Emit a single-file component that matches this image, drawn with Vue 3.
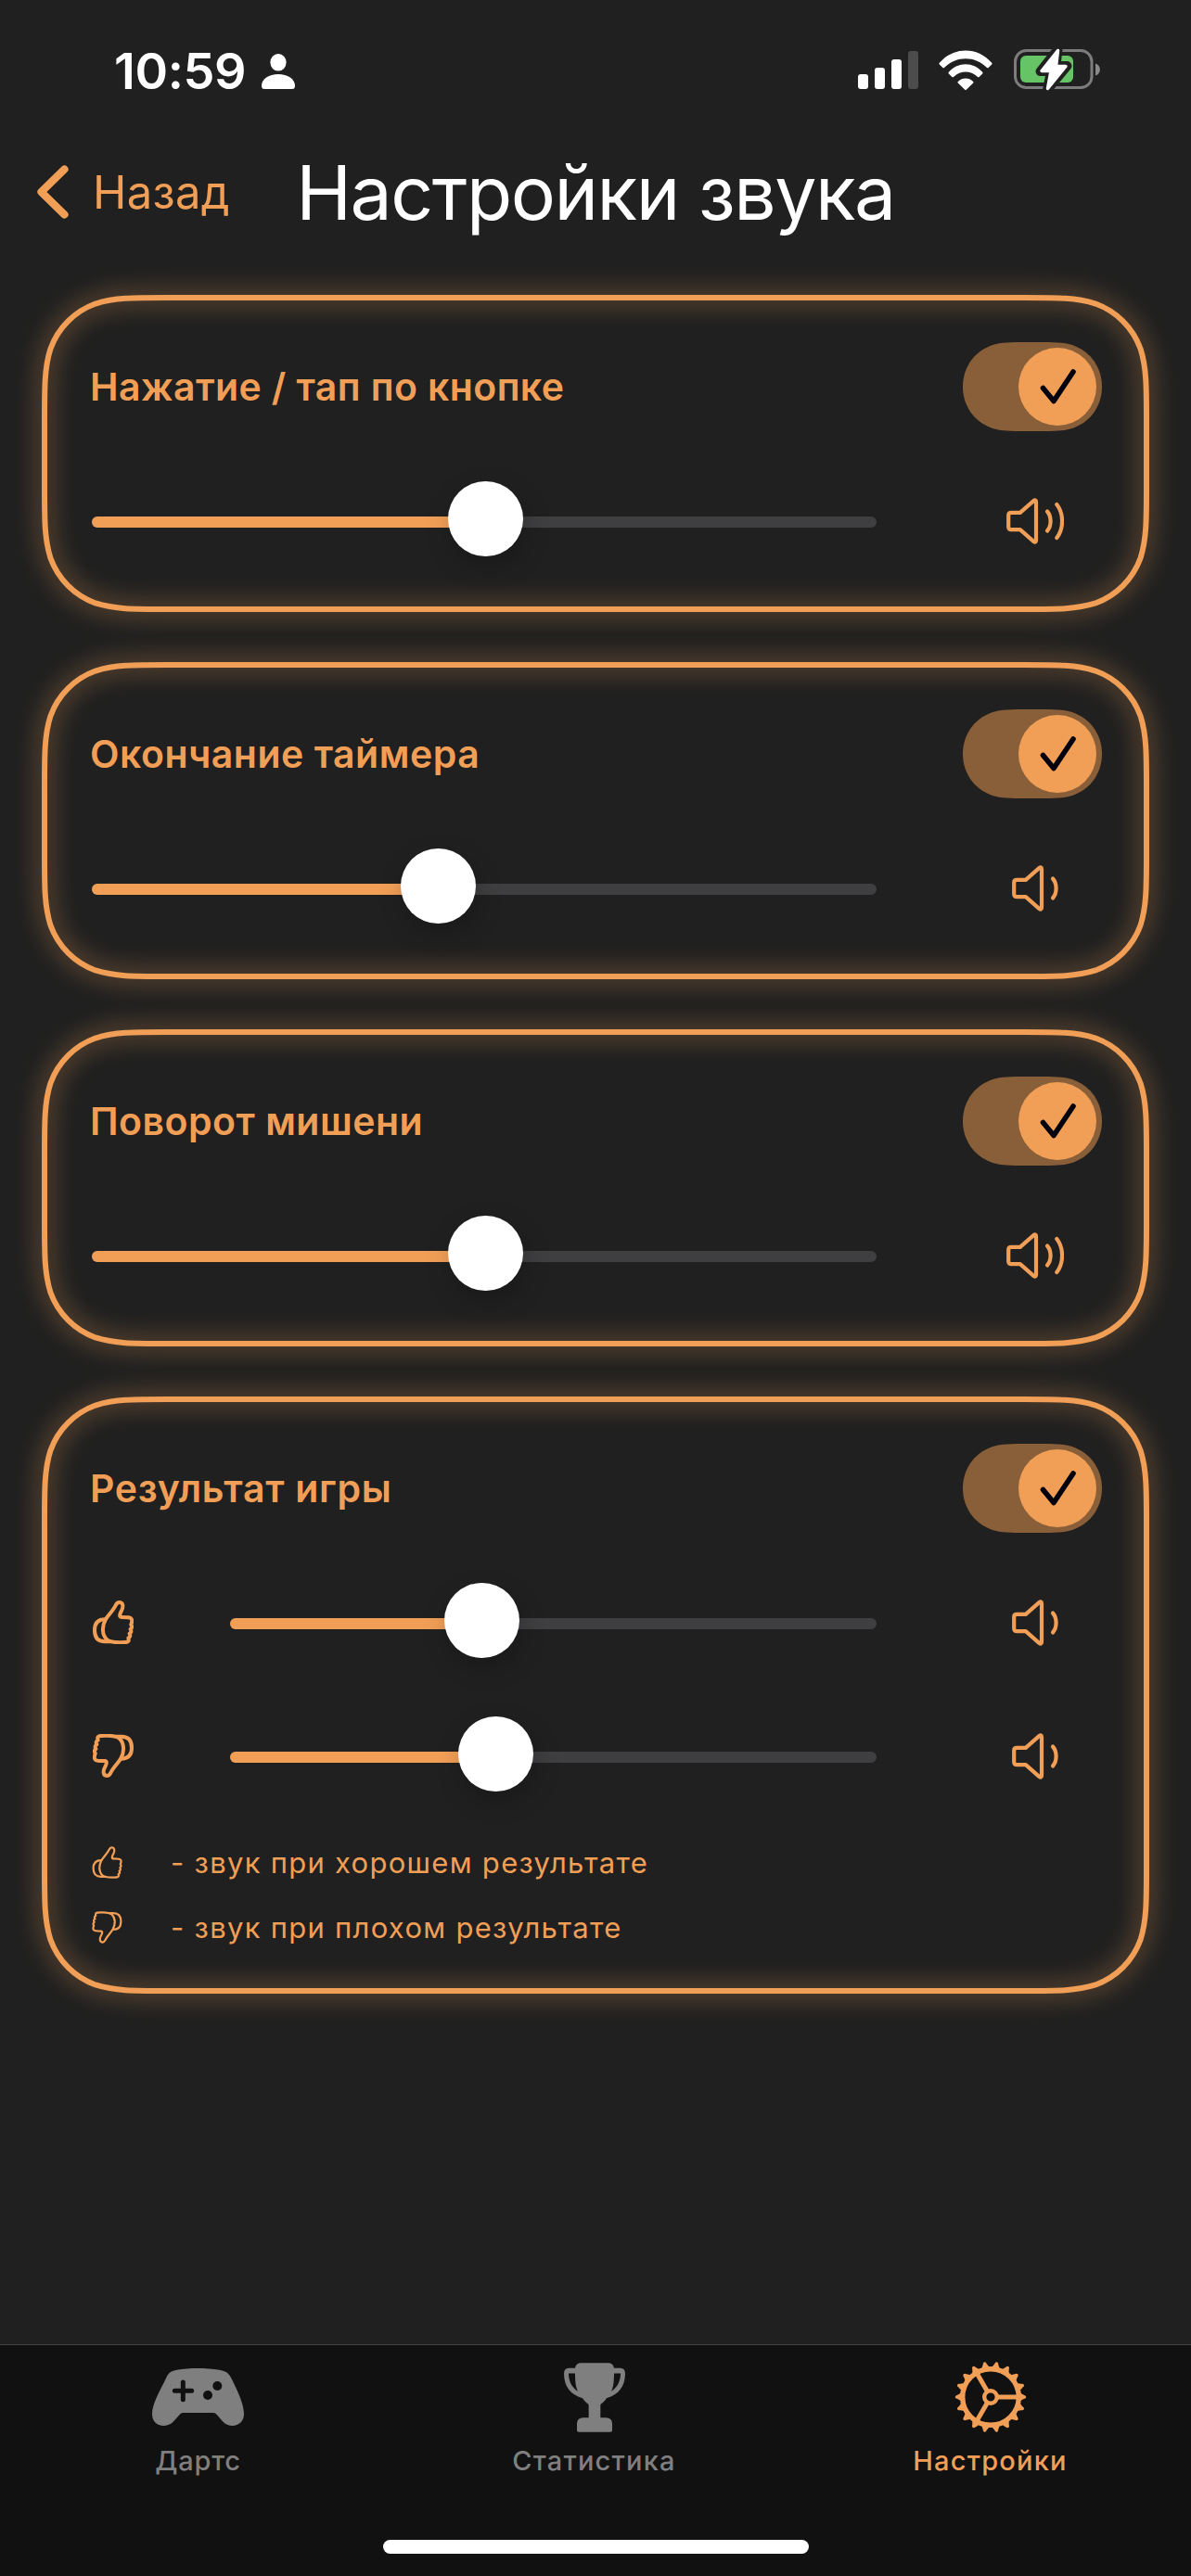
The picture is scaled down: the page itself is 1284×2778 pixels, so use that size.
<script setup>
const R = 90

// Rounded rectangle with continuous-curvature corners
function cardPath(w, h) {
  const i = 3
  const r = R - i
  const x0 = i
  const y0 = i
  const x1 = w - i
  const y1 = h - i
  const a = 1.5287 * r
  const b = 1.0885 * r
  const c = 0.8684 * r
  const d = 0.6315 * r
  const e = 0.0749 * r
  const f = 0.3728 * r
  const g = 0.1691 * r
  return [
    `M${x0 + a} ${y0}H${x1 - a}`,
    `C${x1 - b} ${y0} ${x1 - c} ${y0} ${x1 - d} ${y0 + e}`,
    `C${x1 - f} ${y0 + g} ${x1 - g} ${y0 + f} ${x1 - e} ${y0 + d}`,
    `C${x1} ${y0 + c} ${x1} ${y0 + b} ${x1} ${y0 + a}V${y1 - a}`,
    `C${x1} ${y1 - b} ${x1} ${y1 - c} ${x1 - e} ${y1 - d}`,
    `C${x1 - g} ${y1 - f} ${x1 - f} ${y1 - g} ${x1 - d} ${y1 - e}`,
    `C${x1 - c} ${y1} ${x1 - b} ${y1} ${x1 - a} ${y1}H${x0 + a}`,
    `C${x0 + b} ${y1} ${x0 + c} ${y1} ${x0 + d} ${y1 - e}`,
    `C${x0 + f} ${y1 - g} ${x0 + g} ${y1 - f} ${x0 + e} ${y1 - d}`,
    `C${x0} ${y1 - c} ${x0} ${y1 - b} ${x0} ${y1 - a}V${y0 + a}`,
    `C${x0} ${y0 + b} ${x0} ${y0 + c} ${x0 + e} ${y0 + d}`,
    `C${x0 + g} ${y0 + f} ${x0 + f} ${y0 + g} ${x0 + d} ${y0 + e}`,
    `C${x0 + c} ${y0} ${x0 + b} ${y0} ${x0 + a} ${y0}Z`
  ].join('')
}

const cards = [
  { title: 'Нажатие / тап по кнопке', cls: 't1', height: 342, sliders: [{ value: 50.1, waves: 2 }] },
  { title: 'Окончание таймера', cls: 't2', height: 342, sliders: [{ value: 44.1, waves: 1 }] },
  { title: 'Поворот мишени', cls: 't3', height: 342, sliders: [{ value: 50.1, waves: 2 }] },
  {
    title: 'Результат игры',
    cls: 't4',
    height: 644,
    sliders: [
      { value: 38.9, waves: 1, thumb: 'up' },
      { value: 41.1, waves: 1, thumb: 'down' }
    ],
    legend: [
      { thumb: 'up', text: '- звук при хорошем результате' },
      { thumb: 'down', text: '- звук при плохом результате' }
    ]
  }
]

const thumbHand =
  'M28.5 2C26.5 2 25.5 3.6 24.8 5C22 11 16 16.5 13.8 20.5C9.6 28 10 37 15 42C18 45 24 45.3 30 45.2C36 45.2 38.6 45 38.8 42.5L38.4 40.3Q41.4 38.8 39.6 35.8Q42.6 34 40.6 31Q43.4 29 41.2 26Q43 22 41.6 19.8C40.5 18 38 18 31 18C28.2 18 29 14.5 31 11C33.2 7 33 2 28.5 2Z'
const thumbCuff = 'M13.5 20.3C4 20.3 2 26 2 32C2 40 6 44.2 13 44.2H19'

const teeth = Array.from({ length: 18 }, (_, n) => n * 20)
const spokes = [0, 120, 240]
</script>

<template>
  <div class="screen">
    <header class="status">
      <div class="clock">
        <span class="time">10:59</span>
        <svg class="person" width="36" height="38" viewBox="0 0 36 38">
          <ellipse cx="18" cy="9.3" rx="8.6" ry="9.3" fill="#fff" />
          <path d="M3 38Q0 38 0 34.5C0 27 8 22 18 22S36 27 36 34.5Q36 38 33 38Z" fill="#fff" />
        </svg>
      </div>
      <div class="indicators">
        <svg width="66" height="46" viewBox="0 0 66 46">
          <rect x="0" y="27" width="11" height="16" rx="3" fill="#fff" />
          <rect x="18" y="20" width="11" height="23" rx="3" fill="#fff" />
          <rect x="36" y="11" width="11" height="32" rx="3" fill="#fff" />
          <rect x="54" y="2" width="11" height="41" rx="3" fill="#4c4c4c" />
        </svg>
        <svg class="wifi" width="58" height="46" viewBox="0 0 58 46">
          <path d="M.8 14.7C16-3 42-3 57.200 14.700Q58 15.600 57.200 16.400L53.600 20Q52.800 20.700 52 19.900C39 7 19 7 6 19.900Q5.200 20.700 4.400 20L.8 16.400Q0 15.600 .8 14.700Z" fill="#fff" />
          <path d="M10.800 24.700C21 13.500 37 13.500 47.200 24.700Q48 25.600 47.200 26.400L43.600 30Q42.800 30.700 42 29.900C34 22.800 24 22.800 16 29.900Q15.200 30.700 14.400 30L10.800 26.400Q10 25.600 10.800 24.700Z" fill="#fff" />
          <path d="M20.800 34.900C25.500 30.300 32.500 30.300 37.200 34.900Q38 35.700 37.200 36.500L29.800 43.700Q29 44.400 28.200 43.700L20.800 36.500Q20 35.700 20.800 34.900Z" fill="#fff" />
        </svg>
        <svg class="battery" width="96" height="50" viewBox="0 0 96 50">
          <rect x="1.500" y="4.500" width="82.500" height="40" rx="12" fill="none" stroke="#7c7c7c" stroke-width="3" />
          <path d="M88 18.500C94.500 20.500 94.500 29.500 88 31.500Z" fill="#8a8a8a" />
          <rect x="7" y="10" width="57" height="29" rx="6" fill="#66c466" />
          <path d="M47.500 3L28.500 27H40L36 47L57.500 21H45.500Z" fill="#202020" stroke="#202020" stroke-width="10" stroke-linejoin="round" />
          <path d="M47.500 4.500L30 26.500H40L36.500 45.500L56 21.500H45.500Z" fill="#fff" stroke="#fff" stroke-width="3.500" stroke-linejoin="round" />
        </svg>
      </div>
    </header>

    <nav class="nav">
      <div class="back">
        <svg width="34" height="58" viewBox="0 0 34 58">
          <path d="M29.500 4.500L4.500 29L29.500 53.500" fill="none" stroke="#f19f57" stroke-width="8.200" stroke-linecap="round" stroke-linejoin="round" />
        </svg>
        <span>Назад</span>
      </div>
      <h1>Настройки звука</h1>
      <div></div>
    </nav>

    <main class="cards">
      <section v-for="card in cards" :key="card.title" class="card" :style="{ height: card.height + 'px' }">
        <svg class="frame" width="1194" :height="card.height" :viewBox="`0 0 1194 ${card.height}`">
          <path :d="cardPath(1194, card.height)" />
        </svg>
        <div class="head">
          <h2 :class="card.cls">{{ card.title }}</h2>
          <svg width="150" height="96" viewBox="0 0 150 96">
            <path d="M75 0C93 0 105 0 114 2C135 7 150 25 150 48S135 89 114 94C105 96 93 96 75 96S45 96 36 94C15 89 0 71 0 48S15 7 36 2C45 0 57 0 75 0Z" fill="#885f38" />
            <circle cx="102" cy="48" r="42" fill="#f19f57" />
            <path d="M86.500 49.500L98 63.500L119 32" fill="none" stroke="#02020e" stroke-width="5.600" stroke-linecap="round" stroke-linejoin="round" />
          </svg>
        </div>
        <div class="sliders">
          <div v-for="(s, n) in card.sliders" :key="n" class="row">
            <svg v-if="s.thumb" class="hand" :class="s.thumb" width="44" height="47" viewBox="0 0 44 47">
              <path :d="thumbCuff" />
              <path :d="thumbHand" />
            </svg>
            <div class="slider">
              <div class="fill" :style="{ width: s.value + '%' }"></div>
              <div class="knob" :style="{ left: s.value + '%' }"></div>
            </div>
            <div class="volume">
              <svg :width="s.waves === 2 ? 62 : 50" height="50" :viewBox="`0 -25 ${s.waves === 2 ? 62 : 50} 50`">
                <path d="M2.200 -6.200Q2.200 -9.200 5.200 -9.200H14.800L29 -21.700Q32 -23.800 32 -20.800V20.800Q32 23.800 29 21.700L14.800 9.200H5.200Q2.200 9.200 2.200 6.200Z" />
                <path d="M44 -10.500C48.800 -5 48.800 5 44 10.500" />
                <path v-if="s.waves === 2" d="M54.300 -18C62 -8 62 8 54.300 18" />
              </svg>
            </div>
          </div>
        </div>
        <div v-if="card.legend" class="legend">
          <div v-for="l in card.legend" :key="l.text" class="note">
            <svg class="hand small" :class="l.thumb" width="33" height="35" viewBox="0 0 44 47">
              <path :d="thumbCuff" />
              <path :d="thumbHand" />
            </svg>
            <span>{{ l.text }}</span>
          </div>
        </div>
      </section>
    </main>

    <footer class="tabs">
      <div class="tab">
        <div class="pic">
          <svg width="99" height="62" viewBox="0 0 297 186">
            <path d="M46 30C54 12 64 8 80 5C120 -1.500 174 -1.500 217 5C234 8 246 12 255 30C276 72 297 115 297 148C297 172 280 186 258 186C232 186 222 162 207 148Q203 144 197 144H101Q95 144 91 148C76 162 66 186 38 186C15 186 0 172 0 148C0 115 24 76 46 30Z" fill="#7f7f7f" />
            <path d="M100 45V101M73 73H128" stroke="#111" stroke-width="15" stroke-linecap="round" />
            <circle cx="211" cy="57" r="15" fill="#111" />
            <circle cx="180" cy="87" r="15" fill="#111" />
          </svg>
        </div>
        <span class="l1">Дартс</span>
      </div>
      <div class="tab">
        <div class="pic">
          <svg width="66" height="75" viewBox="0 0 198 224">
            <path fill-rule="evenodd" fill="#7f7f7f" d="M36 17C38 5 46 0 56 0H142C152 0 160 5 162 17H182Q198 17 198 35C198 75 178 103 138 114C132 124 122 130 118 135V177H136Q156 177 156 197V216Q156 224 148 224H50Q42 224 42 216V197Q42 177 62 177H80V135C76 130 66 124 60 114C20 103 0 75 0 35Q0 17 16 17ZM15 34C15 60 26 80 45 92C38 78 36 60 36 34ZM183 34H162C162 60 160 78 153 92C172 80 183 60 183 34Z" />
          </svg>
        </div>
        <span class="l2">Статистика</span>
      </div>
      <div class="tab active">
        <div class="pic">
          <svg width="78" height="78" viewBox="-39 -39 78 78">
            <circle r="30.300" fill="none" stroke="#f19f57" stroke-width="5.400" />
            <path v-for="t in teeth" :key="t" d="M31.500 -4.200C34 -3.600 35 -2.100 37.300 -1.600Q39.200 0 37.300 1.600C35 2.100 34 3.600 31.500 4.200Z" :transform="`rotate(${t})`" fill="#f19f57" />
            <path v-for="t in spokes" :key="'s' + t" d="M7 0H29" :transform="`rotate(${t})`" stroke="#f19f57" stroke-width="5" />
            <circle r="6.800" fill="none" stroke="#f19f57" stroke-width="4.400" />
          </svg>
        </div>
        <span class="l3">Настройки</span>
      </div>
      <div class="home"></div>
    </footer>
  </div>
</template>

<style>
body {
  background: #202020;
}
</style>

<style scoped>
.screen {
  width: 1284px;
  height: 2778px;
  display: flex;
  flex-direction: column;
  overflow: hidden;
  background: #202020;
  color: #f19f57;
  font-family: Inter, "Liberation Sans", sans-serif;
}
svg {
  display: block;
  flex: none;
}
h1,
h2 {
  margin: 0;
  white-space: nowrap;
}
.status {
  height: 150px;
  flex: none;
  display: flex;
  justify-content: space-between;
  padding: 0 95px 0 123px;
  box-sizing: border-box;
}
.clock {
  display: flex;
  gap: 17px;
  color: #fff;
}
.time {
  font-size: 54px;
  font-weight: 600;
  line-height: 66px;
  margin-top: 44px;
  letter-spacing: -0.4px;
}
.person {
  margin-top: 58px;
}
.indicators {
  display: flex;
  padding-top: 53px;
}
.wifi {
  margin-left: 21px;
}
.battery {
  margin: -3px 0 0 23px;
}
.nav {
  height: 120px;
  flex: none;
  display: grid;
  grid-template-columns: 1fr auto 1fr;
}
.back {
  display: flex;
  gap: 26px;
  padding: 28px 0 0 40px;
  font-size: 49px;
  line-height: 60px;
  letter-spacing: 0.3px;
}
h1 {
  font-size: 80.5px;
  font-weight: 400;
  line-height: 98px;
  margin-top: 9px;
  color: #fff;
  letter-spacing: -1.5px;
}
.cards {
  flex: 1;
  display: flex;
  flex-direction: column;
  gap: 54px;
  padding: 48px 45px 0;
}
.card {
  position: relative;
  box-sizing: border-box;
  padding: 51px 51px 0 54px;
  flex: none;
}
.frame {
  position: absolute;
  left: 0;
  top: 0;
  overflow: visible;
  fill: none;
  stroke: #f19f57;
  stroke-width: 6;
  filter: drop-shadow(0 0 13.5px rgba(241, 159, 87, 0.88));
}
.head {
  display: flex;
  align-items: center;
  justify-content: space-between;
}
h2 {
  font-size: 41px;
  font-weight: 600;
  line-height: 50px;
  margin-left: -2px;
  letter-spacing: 0.5px;
}
.t1 {
  letter-spacing: 0.4px;
}
.t4 {
  letter-spacing: 0.7px;
}
.sliders {
  margin-top: 54px;
  display: flex;
  flex-direction: column;
  gap: 63px;
}
.row {
  height: 81px;
  display: flex;
  align-items: center;
}
.slider {
  position: relative;
  flex: 1;
  height: 12px;
  margin-top: 7px;
  border-radius: 6px;
  background: #3f3f41;
}
.fill {
  height: 12px;
  border-radius: 6px;
  background: #f19f57;
}
.knob {
  position: absolute;
  top: -38px;
  width: 81px;
  height: 81px;
  margin-left: -40px;
  border-radius: 50%;
  background: #fff;
  box-shadow: 3px 10px 28px rgba(0, 0, 0, 0.22);
}
.volume {
  width: 144px;
  margin-left: 99px;
  padding-top: 4px;
  display: flex;
  justify-content: center;
}
.volume path {
  fill: none;
  stroke: #f19f57;
  stroke-width: 4.200;
  stroke-linecap: round;
  stroke-linejoin: round;
}
.hand {
  fill: none;
  stroke: #f19f57;
  stroke-width: 4;
  stroke-linejoin: round;
  stroke-linecap: round;
  margin: 4px 104px 0 1px;
}
.hand.small {
  stroke-width: 3;
  margin: 0 52px 0 0;
}
.down {
  transform: rotate(180deg);
}
.legend {
  margin-top: 41px;
}
.note {
  height: 70px;
  display: flex;
  align-items: center;
  font-size: 31px;
  letter-spacing: 1.28px;
  white-space: nowrap;
}
.tabs {
  position: relative;
  height: 250px;
  flex: none;
  box-sizing: border-box;
  border-top: 1px solid #424242;
  background: #111;
  display: flex;
  color: #7f7f7f;
}
.tab {
  flex: 1;
  display: flex;
  flex-direction: column;
  align-items: center;
  font-size: 29px;
  font-weight: 500;
  line-height: 36px;
}
.pic {
  height: 78px;
  margin-top: 17px;
  display: flex;
  align-items: center;
}
.tab span {
  margin-top: 12px;
  letter-spacing: 0.8px;
}
.tab .l2,
.tab .l3 {
  letter-spacing: 1.2px;
}
.active {
  color: #f19f57;
  padding-right: 3px;
}
.home {
  position: absolute;
  left: 413px;
  top: 210px;
  width: 459px;
  height: 15px;
  border-radius: 8px;
  background: #fff;
}
</style>
